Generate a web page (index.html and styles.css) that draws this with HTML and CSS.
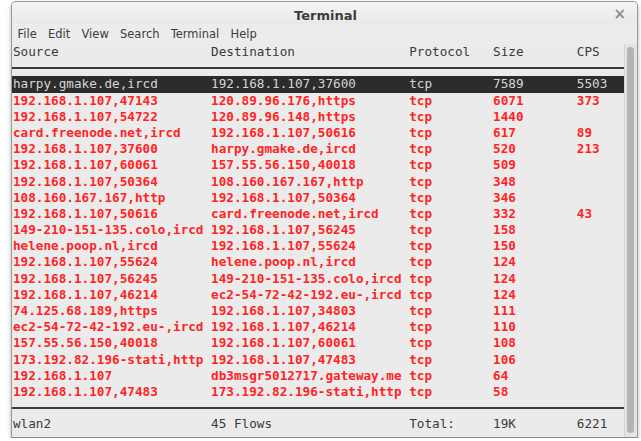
FILE: index.html
```html
<!DOCTYPE html>
<html lang="en">
<head>
    <meta charset="UTF-8">
    <title>Terminal</title>
    <link rel="stylesheet" href="styles.css">
</head>
<body>
    <div class="window">
        <div class="title-bar">
            <span class="title">Terminal</span>
            <span class="close">&#215;</span>
        </div>
        <div class="menu-bar">
            <span>File</span>
            <span>Edit</span>
            <span>View</span>
            <span>Search</span>
            <span>Terminal</span>
            <span>Help</span>
        </div>
        <div class="term-area">
            <div class="term">
                <div class="row head">
                    <span>Source</span><span>Destination</span><span>Protocol</span><span>Size</span><span>CPS</span>
                </div>
                <div class="rule"></div>

                <div class="row selected">
                    <span>harpy.gmake.de,ircd</span><span>192.168.1.107,37600</span><span>tcp</span><span>7589</span><span>5503</span>
                </div>
                <div class="row flow">
                    <span>192.168.1.107,47143</span><span>120.89.96.176,https</span><span>tcp</span><span>6071</span><span>373</span>
                </div>
                <div class="row flow">
                    <span>192.168.1.107,54722</span><span>120.89.96.148,https</span><span>tcp</span><span>1440</span><span></span>
                </div>
                <div class="row flow">
                    <span>card.freenode.net,ircd</span><span>192.168.1.107,50616</span><span>tcp</span><span>617</span><span>89</span>
                </div>
                <div class="row flow">
                    <span>192.168.1.107,37600</span><span>harpy.gmake.de,ircd</span><span>tcp</span><span>520</span><span>213</span>
                </div>
                <div class="row flow">
                    <span>192.168.1.107,60061</span><span>157.55.56.150,40018</span><span>tcp</span><span>509</span><span></span>
                </div>
                <div class="row flow">
                    <span>192.168.1.107,50364</span><span>108.160.167.167,http</span><span>tcp</span><span>348</span><span></span>
                </div>
                <div class="row flow">
                    <span>108.160.167.167,http</span><span>192.168.1.107,50364</span><span>tcp</span><span>346</span><span></span>
                </div>
                <div class="row flow">
                    <span>192.168.1.107,50616</span><span>card.freenode.net,ircd</span><span>tcp</span><span>332</span><span>43</span>
                </div>
                <div class="row flow">
                    <span>149-210-151-135.colo,ircd</span><span>192.168.1.107,56245</span><span>tcp</span><span>158</span><span></span>
                </div>
                <div class="row flow">
                    <span>helene.poop.nl,ircd</span><span>192.168.1.107,55624</span><span>tcp</span><span>150</span><span></span>
                </div>
                <div class="row flow">
                    <span>192.168.1.107,55624</span><span>helene.poop.nl,ircd</span><span>tcp</span><span>124</span><span></span>
                </div>
                <div class="row flow">
                    <span>192.168.1.107,56245</span><span>149-210-151-135.colo,ircd</span><span>tcp</span><span>124</span><span></span>
                </div>
                <div class="row flow">
                    <span>192.168.1.107,46214</span><span>ec2-54-72-42-192.eu-,ircd</span><span>tcp</span><span>124</span><span></span>
                </div>
                <div class="row flow">
                    <span>74.125.68.189,https</span><span>192.168.1.107,34803</span><span>tcp</span><span>111</span><span></span>
                </div>
                <div class="row flow">
                    <span>ec2-54-72-42-192.eu-,ircd</span><span>192.168.1.107,46214</span><span>tcp</span><span>110</span><span></span>
                </div>
                <div class="row flow">
                    <span>157.55.56.150,40018</span><span>192.168.1.107,60061</span><span>tcp</span><span>108</span><span></span>
                </div>
                <div class="row flow">
                    <span>173.192.82.196-stati,http</span><span>192.168.1.107,47483</span><span>tcp</span><span>106</span><span></span>
                </div>
                <div class="row flow">
                    <span>192.168.1.107</span><span>db3msgr5012717.gateway.me</span><span>tcp</span><span>64</span><span></span>
                </div>
                <div class="row flow">
                    <span>192.168.1.107,47483</span><span>173.192.82.196-stati,http</span><span>tcp</span><span>58</span><span></span>
                </div>

                <div class="rule"></div>
                <div class="row head">
                    <span>wlan2</span><span>45 Flows</span><span>Total:</span><span>19K</span><span>6221</span>
                </div>
            </div>
            <div class="scrollbar">
                <div class="thumb"></div>
            </div>
        </div>
    </div>
</body>
</html>
```

FILE: styles.css
```css
body, html {
    margin: 0;
    padding: 0;
    background: #ffffff;
}

.window {
    margin: 1px 0 0 11px;
    width: 627px;
    height: 437px;
    display: flex;
    flex-direction: column;
    background: #ececec;
    border: 1px solid #9a9a9a;
    border-bottom-color: #8a8a8a;
    border-radius: 5px 5px 0 0;
    box-shadow: 0 2px 4px rgba(0, 0, 0, 0.3);
    box-sizing: border-box;
    overflow: hidden;
}

.title-bar {
    flex-shrink: 0;
    height: 22px;
    display: flex;
    align-items: center;
    justify-content: center;
    position: relative;
    background: linear-gradient(#f4f4f4, #e9e9e9);
}

.title {
    position: relative;
    top: 2px;
    font-family: "DejaVu Sans", sans-serif;
    font-weight: bold;
    font-size: 13px;
    color: #3c3c3c;
    margin-left: 2px;
}

.close {
    position: absolute;
    right: 11px;
    top: 3px;
    font-family: "DejaVu Sans", sans-serif;
    font-size: 15px;
    font-weight: bold;
    color: #8e8e8e;
}

.menu-bar {
    flex-shrink: 0;
    height: 20px;
    padding: 0 0 1px 0;
    box-sizing: border-box;
    display: flex;
    align-items: center;
    font-family: "DejaVu Sans", sans-serif;
    font-size: 11.5px;
    color: #3c3c3c;
}

.menu-bar span {
    padding: 0 5.6px;
}

.term-area {
    flex: 1;
    min-height: 0;
    display: flex;
    background: #ebebeb;
}

.term {
    flex: 1;
    font-family: "DejaVu Sans Mono", monospace;
    font-size: 12.67px;
    line-height: 16.19px;
}

.row {
    display: grid;
    grid-template-columns: 26ch 26ch 11ch 11ch 1fr;
    height: 16.19px;
    padding-left: 1px;
}

.row span {
    white-space: pre;
}

.head {
    color: #3a3a3a;
}

.flow {
    color: #ff2424;
    font-weight: bold;
}

.selected {
    background: #2c2c2c;
    color: #d6d6d6;
}

.rule {
    height: 16.19px;
    display: flex;
    align-items: center;
}

.rule::before {
    content: '';
    flex: 1;
    height: 2px;
    background: #3a3a3a;
}

.scrollbar {
    width: 13px;
    border-left: 1px solid #d4d4d4;
    background: #e4e4e4;
    padding: 3px 3px 4px 2px;
    box-sizing: border-box;
    display: flex;
}

.thumb {
    flex: 1;
    background: #b4b4b4;
    border-radius: 4px;
}
```
